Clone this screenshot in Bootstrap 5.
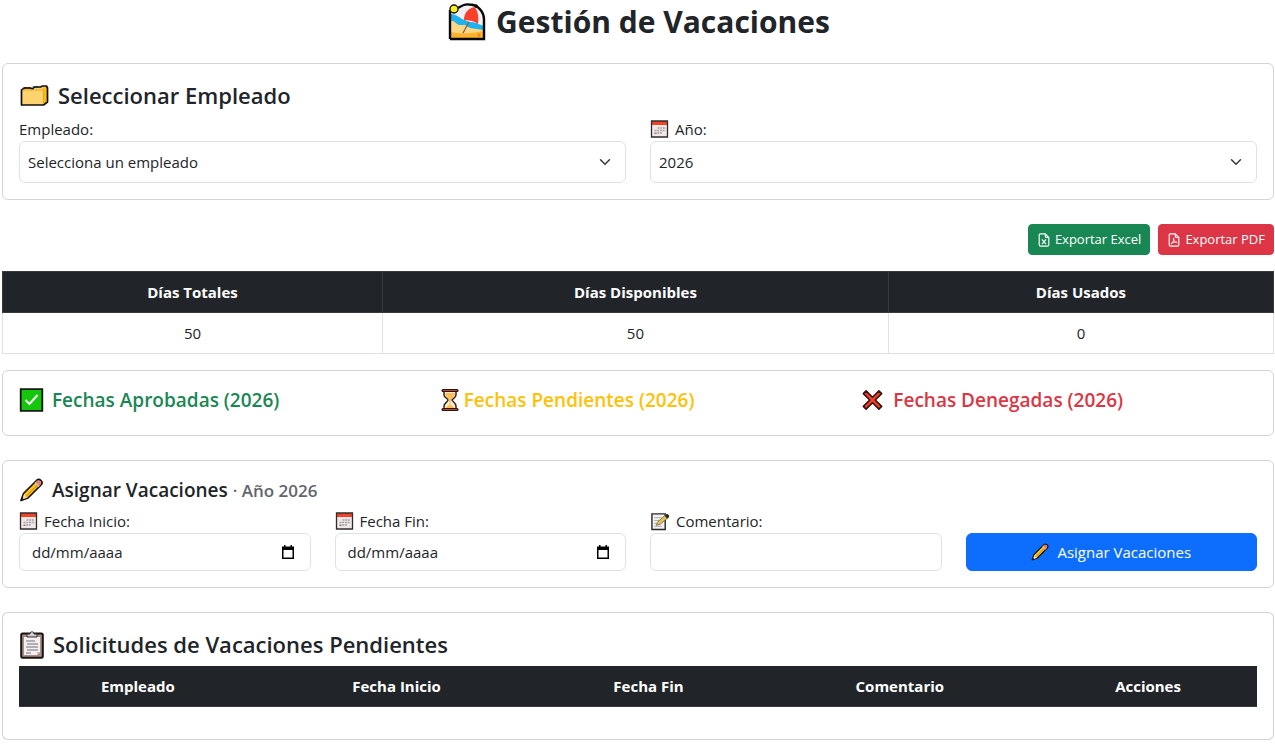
<!DOCTYPE html>
<html lang="es">
<head>
<meta charset="utf-8">
<meta name="viewport" content="width=device-width, initial-scale=1">
<title>Gestión de Vacaciones</title>
<link rel="stylesheet" href="https://cdn.jsdelivr.net/npm/bootstrap@5.3.0/dist/css/bootstrap.min.css">
<style>
  body { font-family: "Open Sans", "Noto Sans", sans-serif; font-size: 15px; line-height: 24px; }
  .page { padding: 3px 1px 4px 2px; }
  .page-title { font-size: 30px; line-height: 38px; font-weight: 700; margin-bottom: 22px; }
  .panel { border-color: #d3d4d5; margin-bottom: 24px; }
  .section-title { font-size: 22px; line-height: 31px; font-weight: 600; margin-bottom: 6px; }
  .group-title { font-size: 19px; line-height: 26px; font-weight: 600; margin-bottom: 6px; }
  .year-note { font-size: 17px; line-height: 1; color: #5f666d; }
  .form-label { margin: 0; display: flex; align-items: center; gap: 6px; }
  .form-control, .form-select { font-size: 15px; line-height: 24px; }
  .form-select { padding: 8px 36px 8px 8px; }
  .date-field { padding-right: 40px; }
  .date-field::placeholder { color: #212529; opacity: 1; }
  .date-button { position: absolute; right: 15px; top: 0; bottom: 0; border: 0; padding: 0; background: none; display: flex; align-items: center; }
  .btn { font-size: 15px; line-height: 24px; }
  .btn-sm { font-size: 13px; line-height: 21px; padding: 4px 8px; }
  .table { margin-bottom: 16px; }
  .days th:nth-child(1) { width: 29.9%; }
  .days th:nth-child(2) { width: 39.8%; }
  .requests th:nth-child(1) { width: 19.2%; }
  .requests th:nth-child(2) { width: 22.6%; }
  .requests th:nth-child(3) { width: 18.1%; }
  .requests th:nth-child(4) { width: 22.5%; }
  svg { flex: none; }
</style>
</head>
<body>
<svg width="0" height="0" class="position-absolute" aria-hidden="true">
  <symbol id="beach" viewBox="0 0 38 38">
    <path d="M2 36V8L9 5C13 2 17 1 21 2c9 0 15 7 15 15v19z" fill="#f4eff4"/>
    <path d="M2 11c5 0 8 2 12 5l8 3c5 0 9 2 14 4v5L2 24z" fill="#1eb3ee"/>
    <path d="M2 18c4-1 6 3 9 4h6l5 3 14 2v9H2z" fill="#ffd784"/>
    <path d="M2 29c10 2 20 2 34-1v8H2z" fill="#fbb42b"/>
    <path d="M21 19 15 30" stroke="#7d6048" stroke-width="1.3"/>
    <path d="M16 17c0-6 3-11 10-13 5 3 6 10 4 17-4-3-8-4-14-4z" fill="#fa4028"/>
    <path d="M27 4c6 3 9 10 8 18l-5-1c1-7 0-12-3-17z" fill="#f4eff4"/>
    <circle cx="31" cy="32" r="1.5" fill="#e5872b"/>
    <path d="M2 36V7M10 5c3-2 7-4 11-3.500 9 0 15 7 15 15.500v19H2" fill="none" stroke="#080808" stroke-width="2.4"/>
    <circle cx="6" cy="6" r="4" fill="#fff21b" stroke="#151515" stroke-width="1.4"/>
    <circle cx="28" cy="3" r="1.7"/>
  </symbol>
  <symbol id="folder" viewBox="0 0 30 24">
    <path d="M2 5h2l2-2h5l1 1 3-1h5l2-1h5l1 2v14l-4 3H2z" fill="#ffd36f"/>
    <path d="m23 5 5-3v16l-4 3z" fill="#f9bd18"/>
    <path d="M4 4h7" stroke="#e84a23" stroke-width="2"/>
    <path d="M13 3h6" stroke="#3882a8" stroke-width="1.4"/>
    <path d="M2 21V6l3-2h6l2 1 2-2h6l2-1h4l1 2v14l-4 3z" fill="none" stroke="#111" stroke-width="1.7" stroke-linejoin="round"/>
    <path d="M3 6h19l3-3M24 6v14" fill="none" stroke="#e9a719"/>
  </symbol>
  <symbol id="calendar" viewBox="0 0 18 18">
    <path d="M1 1h16v16H1z" fill="#eee8e8"/>
    <path d="M1 1h16v4H1z" fill="#ef4426"/>
    <path d="M1 1h16v16H1z" fill="none" stroke="#302c2c" stroke-width="1.3"/>
    <path d="M7 8h8M4 10.5h11M4 13h8" stroke="#aaa2a5" stroke-width="1.5" stroke-dasharray="2 .7"/>
    <path d="M4 13.5h2" stroke="#bf706c"/>
  </symbol>
  <symbol id="check" viewBox="0 0 24 24">
    <path d="M1.2 1.2h21.6v21.6H1.2z" fill="#16c60c" stroke="#101810" stroke-width="1.8"/>
    <path d="m6 12 4 4 8-9" fill="none" stroke="#f3fff3" stroke-width="2"/>
  </symbol>
  <symbol id="hourglass" viewBox="0 0 18 24">
    <path d="M3 3h12v4c0 3-4 4-4 5s4 3 4 6v3H3v-3c0-3 4-4 4-6S3 10 3 7z" fill="#f9eee6" stroke="#33241f" stroke-width="1.5"/>
    <path d="M4 5h10c0 4-4 5-4.500 8h-1C8 10 4 9 4 5zM5 20c0-3 4-2 4-5 0 3 4 2 4 5z" fill="#ffc050"/>
    <path d="M9 11v5" stroke="#ffb82e"/>
    <path d="M2 2.500h14M2 21.500h14" stroke="#301410" stroke-width="3.200" stroke-linecap="round"/>
    <path d="M2 2.500h14M2 21.500h14" stroke="#b24b31" stroke-width="1.200"/>
  </symbol>
  <symbol id="cross" viewBox="0 0 24 24">
    <path d="m5 2 7 7 7-7 3 3-7 7 7 7-3 3-7-7-7 7-3-3 7-7-7-7z" fill="#f04128" stroke="#32100d" stroke-width="1.700" stroke-linejoin="round"/>
  </symbol>
  <symbol id="pencil" viewBox="0 0 24 24">
    <path d="m1.500 22.500 2.500-7L17 2.500c1-1.500 3-1.500 4.500 0s1.500 3 0 4.500L8.500 20z" fill="#fcc526" stroke="#171411" stroke-width="1.700" stroke-linejoin="round"/>
    <path d="m4.500 16 3.500 3.500-5 2z" fill="#ffd7a5"/>
    <path d="m16 4 1.500-1.200c2-1.500 5 1.500 3.500 3.700L20 8z" fill="#e47782"/>
    <path d="m15 5 4 4 1-1-4-4z" fill="#c8c6c8"/>
    <path d="M6.500 18.500 18 7" stroke="#df9a16" stroke-width="1.500"/>
    <path d="m1.500 22.500 1-3 2 2z" fill="#171411"/>
  </symbol>
  <symbol id="memo" viewBox="0 0 20 20">
    <path d="M1.500 2h14v16.500h-14z" fill="#f3eff0" stroke="#292929" stroke-width="1.500"/>
    <path d="M4 6h8M4 9h6M4 12h5M4 15h8" stroke="#abaaae"/>
    <path d="m6 14 2-4 8-7c2-1 4 1 2.500 3L10 13z" fill="#e7c44c" stroke="#5a5541" stroke-width=".7"/>
    <path d="m15 4 1.500-1.300c2-1 4 1 2.500 2.800l-1.500 1.500z" fill="#292525"/>
  </symbol>
  <symbol id="clipboard" viewBox="0 0 24 28">
    <rect x="1.200" y="2.500" width="21.600" height="24.300" rx="1.500" fill="#aa8d83" stroke="#181414" stroke-width="2"/>
    <path d="M4 6h16v15l-3 3H4z" fill="#f4f0f1"/>
    <path d="M17 24v-3h3" fill="#c8bfc2"/>
    <path d="M7 6V3h3c0-3 4-3 4 0h3v3z" fill="#d1cccf" stroke="#332e2d"/>
    <path d="M6 10h9M7 13h11M6 16h12M7 19h11M6 22h5" stroke="#716f74" stroke-width="1.200"/>
  </symbol>
  <symbol id="picker" viewBox="0 0 14 14">
    <path d="M3 0h1.500v1.500h5V0H11v1.500h2V14H1V1.500h2zM2.500 5v7.500h9V5z" fill="#000" fill-rule="evenodd"/>
  </symbol>
  <symbol id="excel" viewBox="0 0 16 16">
    <path d="M9.500 1H4a1.500 1.500 0 0 0-1.500 1.500v11A1.500 1.500 0 0 0 4 15h8a1.500 1.500 0 0 0 1.500-1.500V5zM9.500 1v3a1 1 0 0 0 1 1h3M5.700 7.200l4.600 5.600M10.300 7.200l-4.600 5.600" fill="none" stroke="currentColor" stroke-width="1.300"/>
  </symbol>
  <symbol id="pdf" viewBox="0 0 16 16">
    <path d="M9.500 1H4a1.500 1.500 0 0 0-1.500 1.500v11A1.500 1.500 0 0 0 4 15h8a1.500 1.500 0 0 0 1.500-1.500V5zM9.500 1v3a1 1 0 0 0 1 1h3" fill="none" stroke="currentColor" stroke-width="1.300"/>
    <path d="M4.800 12.500c1.200-.6 3-4 3.100-6 0-.8-.8-.8-.7 0 .1 1.700 2 4.200 3.600 4.500 1 .1.900-.8-.1-.8-1.800 0-4.200.7-5.600 1.500-.7.400-.8.800-.3.800z" fill="none" stroke="currentColor"/>
  </symbol>
</svg>

<main class="page container-fluid">
  <h1 class="page-title d-flex justify-content-center align-items-center gap-2">
    <svg width="42" height="38" aria-hidden="true"><use href="#beach"/></svg>Gestión de Vacaciones
  </h1>

  <section class="card panel">
    <div class="card-body">
      <h2 class="section-title d-flex align-items-center gap-2">
        <svg width="31" height="24" aria-hidden="true"><use href="#folder"/></svg>Seleccionar Empleado
      </h2>
      <div class="row">
        <div class="col-6">
          <label class="form-label" for="empleado">Empleado:</label>
          <select class="form-select" id="empleado"><option>Selecciona un empleado</option></select>
        </div>
        <div class="col-6">
          <label class="form-label" for="anio"><svg width="19" height="18" aria-hidden="true"><use href="#calendar"/></svg>Año:</label>
          <select class="form-select" id="anio"><option>2026</option></select>
        </div>
      </div>
    </div>
  </section>

  <div class="d-flex justify-content-end gap-2 mb-3">
    <button type="button" class="btn btn-success btn-sm d-flex align-items-center gap-1"><svg width="14" height="14" aria-hidden="true"><use href="#excel"/></svg>Exportar Excel</button>
    <button type="button" class="btn btn-danger btn-sm d-flex align-items-center gap-1"><svg width="14" height="14" aria-hidden="true"><use href="#pdf"/></svg>Exportar PDF</button>
  </div>

  <table class="table table-bordered text-center days">
    <thead class="table-dark"><tr><th>Días Totales</th><th>Días Disponibles</th><th>Días Usados</th></tr></thead>
    <tbody><tr><td>50</td><td>50</td><td>0</td></tr></tbody>
  </table>

  <section class="card panel">
    <div class="card-body">
      <div class="row">
        <div class="col-4"><h3 class="group-title text-success d-flex align-items-center gap-2"><svg width="25" height="24" aria-hidden="true"><use href="#check"/></svg>Fechas Aprobadas (2026)</h3></div>
        <div class="col-4"><h3 class="group-title text-warning d-flex align-items-center gap-1"><svg width="20" height="24" aria-hidden="true"><use href="#hourglass"/></svg>Fechas Pendientes (2026)</h3></div>
        <div class="col-4"><h3 class="group-title text-danger d-flex align-items-center gap-2"><svg width="25" height="22" aria-hidden="true"><use href="#cross"/></svg>Fechas Denegadas (2026)</h3></div>
      </div>
    </div>
  </section>

  <section class="card panel">
    <form class="card-body">
      <h3 class="group-title d-flex align-items-center gap-2">
        <svg width="25" height="24" aria-hidden="true"><use href="#pencil"/></svg><span>Asignar Vacaciones <span class="year-note">· Año 2026</span></span>
      </h3>
      <div class="row align-items-end">
        <div class="col-3">
          <label class="form-label" for="inicio"><svg width="19" height="18" aria-hidden="true"><use href="#calendar"/></svg>Fecha Inicio:</label>
          <div class="position-relative">
            <input type="text" class="form-control date-field" id="inicio" placeholder="dd/mm/aaaa">
            <button type="button" class="date-button" aria-label="Abrir calendario"><svg width="16" height="14" aria-hidden="true"><use href="#picker"/></svg></button>
          </div>
        </div>
        <div class="col-3">
          <label class="form-label" for="fin"><svg width="19" height="18" aria-hidden="true"><use href="#calendar"/></svg>Fecha Fin:</label>
          <div class="position-relative">
            <input type="text" class="form-control date-field" id="fin" placeholder="dd/mm/aaaa">
            <button type="button" class="date-button" aria-label="Abrir calendario"><svg width="16" height="14" aria-hidden="true"><use href="#picker"/></svg></button>
          </div>
        </div>
        <div class="col-3">
          <label class="form-label" for="comentario"><svg width="20" height="19" aria-hidden="true"><use href="#memo"/></svg>Comentario:</label>
          <input type="text" class="form-control" id="comentario">
        </div>
        <div class="col-3">
          <button type="button" class="btn btn-primary w-100 d-flex justify-content-center align-items-center gap-2"><svg width="18" height="18" aria-hidden="true"><use href="#pencil"/></svg>Asignar Vacaciones</button>
        </div>
      </div>
    </form>
  </section>

  <section class="card">
    <div class="card-body">
      <h2 class="section-title d-flex align-items-center gap-2">
        <svg width="26" height="28" aria-hidden="true"><use href="#clipboard"/></svg>Solicitudes de Vacaciones Pendientes
      </h2>
      <table class="table text-center requests">
        <thead class="table-dark"><tr><th>Empleado</th><th>Fecha Inicio</th><th>Fecha Fin</th><th>Comentario</th><th>Acciones</th></tr></thead>
        <tbody></tbody>
      </table>
    </div>
  </section>
</main>
<script src="https://cdn.jsdelivr.net/npm/bootstrap@5.3.0/dist/js/bootstrap.bundle.min.js"></script>
</body>
</html>
